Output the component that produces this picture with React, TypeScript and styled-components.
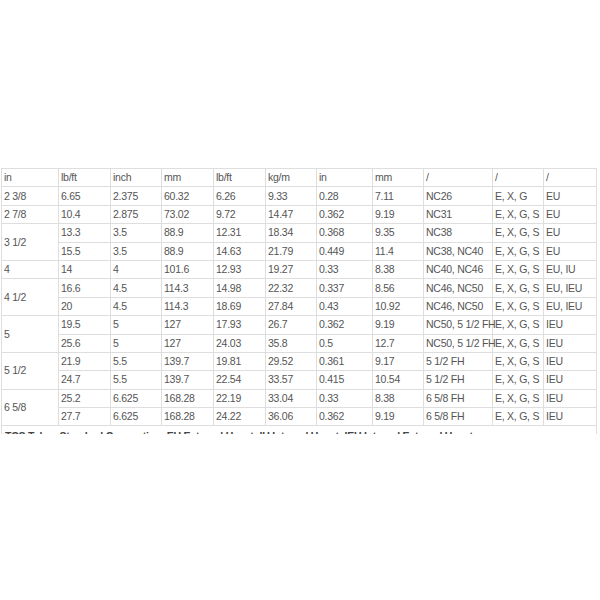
import styled, { createGlobalStyle } from "styled-components";

const GlobalStyle = createGlobalStyle`
  html, body {
    margin: 0;
    padding: 0;
    background: #ffffff;
  }
`;

const columns = [57, 52, 51, 52, 52, 51, 56, 51, 69, 51, 53];
const headers = ["in", "lb/ft", "inch", "mm", "lb/ft", "kg/m", "in", "mm", "/", "/", "/"];

// size, then one entry per row of that size
const groups: { size: string; rows: string[][] }[] = [
  { size: "2 3/8", rows: [["6.65", "2.375", "60.32", "6.26", "9.33", "0.28", "7.11", "NC26", "E, X, G", "EU"]] },
  { size: "2 7/8", rows: [["10.4", "2.875", "73.02", "9.72", "14.47", "0.362", "9.19", "NC31", "E, X, G, S", "EU"]] },
  {
    size: "3 1/2",
    rows: [
      ["13.3", "3.5", "88.9", "12.31", "18.34", "0.368", "9.35", "NC38", "E, X, G, S", "EU"],
      ["15.5", "3.5", "88.9", "14.63", "21.79", "0.449", "11.4", "NC38, NC40", "E, X, G, S", "EU"],
    ],
  },
  { size: "4", rows: [["14", "4", "101.6", "12.93", "19.27", "0.33", "8.38", "NC40, NC46", "E, X, G, S", "EU, IU"]] },
  {
    size: "4 1/2",
    rows: [
      ["16.6", "4.5", "114.3", "14.98", "22.32", "0.337", "8.56", "NC46, NC50", "E, X, G, S", "EU, IEU"],
      ["20", "4.5", "114.3", "18.69", "27.84", "0.43", "10.92", "NC46, NC50", "E, X, G, S", "EU, IEU"],
    ],
  },
  {
    size: "5",
    rows: [
      ["19.5", "5", "127", "17.93", "26.7", "0.362", "9.19", "NC50, 5 1/2 FH", "E, X, G, S", "IEU"],
      ["25.6", "5", "127", "24.03", "35.8", "0.5", "12.7", "NC50, 5 1/2 FH", "E, X, G, S", "IEU"],
    ],
  },
  {
    size: "5 1/2",
    rows: [
      ["21.9", "5.5", "139.7", "19.81", "29.52", "0.361", "9.17", "5 1/2 FH", "E, X, G, S", "IEU"],
      ["24.7", "5.5", "139.7", "22.54", "33.57", "0.415", "10.54", "5 1/2 FH", "E, X, G, S", "IEU"],
    ],
  },
  {
    size: "6 5/8",
    rows: [
      ["25.2", "6.625", "168.28", "22.19", "33.04", "0.33", "8.38", "6 5/8 FH", "E, X, G, S", "IEU"],
      ["27.7", "6.625", "168.28", "24.22", "36.06", "0.362", "9.19", "6 5/8 FH", "E, X, G, S", "IEU"],
    ],
  },
];

export default function App() {
  return (
    <Page>
      <GlobalStyle />
      <Clip>
        <SpecTable>
          <colgroup>
            {columns.map((w, i) => (
              <col key={i} style={{ width: w }} />
            ))}
          </colgroup>
          <tbody>
            <Row>
              {headers.map((h, i) => (
                <Cell key={i}>{h}</Cell>
              ))}
            </Row>
            {groups.map((g) =>
              g.rows.map((r, ri) => (
                <Row key={g.size + ri}>
                  {ri === 0 && <Cell rowSpan={g.rows.length}>{g.size}</Cell>}
                  {r.map((v, ci) => (
                    <Cell key={ci}>{v}</Cell>
                  ))}
                </Row>
              ))
            )}
            <Row>
              <Note colSpan={11}>
                TCS Tubes Standard Connection: EU External Upset; IU Internal Upset; IEU Internal External Upset
              </Note>
            </Row>
          </tbody>
        </SpecTable>
      </Clip>
    </Page>
  );
}

const Page = styled.div`
  width: 600px;
  height: 600px;
  background: #ffffff;
  padding-top: 168px;
  padding-left: 1px;
  box-sizing: border-box;
`;

const Clip = styled.div`
  height: 266px;
  overflow: hidden;
`;

const SpecTable = styled.table`
  border-collapse: collapse;
  table-layout: fixed;
  width: 595px;
  font-family: "Liberation Sans", Arial, sans-serif;
  font-size: 10.5px;
  letter-spacing: -0.25px;
  color: #555555;
`;

const Row = styled.tr`
  height: 18.4px;
`;

const Cell = styled.td`
  border: 1px solid #dedede;
  padding: 0 2px;
  white-space: nowrap;
  vertical-align: middle;
  line-height: 13px;
`;

const Note = styled.td`
  border: 1px solid #dedede;
  padding: 2px 3px 0;
  white-space: nowrap;
  font-weight: bold;
  color: #444444;
  line-height: 13px;
`;
